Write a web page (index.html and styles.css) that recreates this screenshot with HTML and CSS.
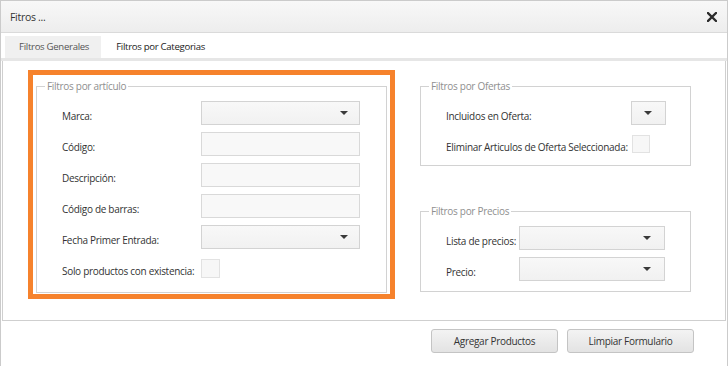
FILE: index.html
```html
<!DOCTYPE html>
<html lang="es">
<head>
<meta charset="utf-8">
<title>Fitros ...</title>
<link rel="stylesheet" href="styles.css">
</head>
<body>
<div class="window">
  <div class="titlebar">
    <span class="title">Fitros ...</span>
    <svg class="close" width="10" height="10" viewBox="0 0 10 10"><path d="M1 1 L9 9 M9 1 L1 9" stroke="#2b2b2b" stroke-width="2.3" stroke-linecap="square"/></svg>
  </div>
  <div class="tabs">
    <div class="tab active">Filtros Generales</div>
    <div class="tab">Filtros por Categorias</div>
  </div>
  <div class="panel">
    <div class="highlight">
      <fieldset class="group group-art">
        <legend>Filtros por artículo</legend>
        <div class="rows">
          <div class="row"><span class="label">Marca:</span><div class="select wide"><span class="arrow"></span></div></div>
          <div class="row"><span class="label">Código:</span><div class="input wide"></div></div>
          <div class="row"><span class="label">Descripción:</span><div class="input wide"></div></div>
          <div class="row"><span class="label">Código de barras:</span><div class="input wide"></div></div>
          <div class="row"><span class="label">Fecha Primer Entrada:</span><div class="select wide"><span class="arrow"></span></div></div>
          <div class="row"><span class="label">Solo productos con existencia:</span><div class="check"></div></div>
        </div>
      </fieldset>
    </div>
    <div class="side">
      <fieldset class="group group-side">
        <legend>Filtros por Ofertas</legend>
        <div class="rows">
          <div class="row"><span class="label lab-of">Incluidos en Oferta:</span><div class="select tiny"><span class="arrow"></span></div></div>
          <div class="row"><span class="label lab-of">Eliminar Articulos de Oferta Seleccionada:</span><div class="check check-of"></div></div>
        </div>
      </fieldset>
      <fieldset class="group group-side group-price">
        <legend>Filtros por Precios</legend>
        <div class="rows">
          <div class="row"><span class="label lab-pr">Lista de precios:</span><div class="select mid"><span class="arrow"></span></div></div>
          <div class="row"><span class="label lab-pr">Precio:</span><div class="select mid"><span class="arrow"></span></div></div>
        </div>
      </fieldset>
    </div>
  </div>
  <div class="footer">
    <button class="btn">Agregar Productos</button>
    <button class="btn">Limpiar Formulario</button>
  </div>
</div>
</body>
</html>
```

FILE: styles.css
```css
* { box-sizing: border-box; }
html, body { margin: 0; padding: 0; background: #fff; }
body { font-family: "Open Sans", "Noto Sans", sans-serif; font-size: 10px; letter-spacing: -0.3px; color: #333; }

.window {
  width: 728px;
  height: 366px;
  border: 1px solid #cbcbcb;
  border-bottom: none;
  background: #fff;
  overflow: hidden;
}

.titlebar {
  height: 32px;
  border-bottom: 1px solid #dadada;
  background: linear-gradient(#f8f8f8, #ededed);
  display: flex;
  align-items: center;
  justify-content: space-between;
  padding: 0 10px 0 9px;
}
.title { font-size: 10.5px; color: #333; }
.close { display: block; }

.tabs {
  height: 28px;
  padding: 3px 0 0 4px;
  border-bottom: 3px solid #e6e6e6;
  display: flex;
}
.tab {
  height: 22px;
  line-height: 22px;
  padding: 0 12px 0 14px;
  font-size: 9.6px;
  color: #222;
}
.tab.active { background: #f0f0f0; color: #555; }
.tab + .tab { padding-left: 15px; }

.panel {
  margin: 0 1px;
  height: 260px;
  border: 1px solid #cfcfcf;
  border-top: none;
  padding: 9px 0 0 25px;
  display: flex;
  align-items: flex-start;
}

.highlight {
  width: 367px;
  height: 229px;
  border: 5px solid #f6822c;
  padding: 5px 3px 0 3px;
}

.group {
  margin: 0;
  padding: 0;
  border: 1px solid #d2d2d2;
  min-width: 0;
}
.group legend {
  margin-left: 8px;
  padding: 0 2px;
  font-size: 10px;
  line-height: 12px;
  color: #8f8f8f;
}
.group-art { height: 213px; }
.rows {
  display: flex;
  flex-direction: column;
  gap: 7px;
  padding: 9px 0 0 25px;
}
.row {
  display: flex;
  height: 24px;
  align-items: center;
}
.label {
  width: 139px;
  flex: none;
  padding-top: 5px;
  color: #333;
  white-space: nowrap;
}

.select, .input {
  height: 24px;
  border: 1px solid #d3d3d3;
  background: #f6f6f6;
  position: relative;
}
.select { background: linear-gradient(#f8f8f8, #f1f1f1); }
.input { background: #f8f8f8; border-color: #d9d9d9; }
.wide { width: 159px; }
.tiny { width: 35px; }
.mid { width: 146px; }
.arrow {
  position: absolute;
  right: 11px;
  top: 9px;
  width: 0;
  height: 0;
  border-left: 4px solid transparent;
  border-right: 4px solid transparent;
  border-top: 4px solid #3a3a3a;
}
.tiny .arrow, .mid .arrow { right: 13px; }

.check {
  width: 19px;
  height: 19px;
  border: 1px solid #e2e2e2;
  background: #f7f7f7;
}
.check-of { width: 18px; height: 18px; margin-left: 1px; }

.side {
  margin-left: 25px;
  margin-top: 10px;
  width: 271px;
  display: flex;
  flex-direction: column;
}
.group-side { height: 86px; }
.group-price { margin-top: 39px; height: 87px; }
.lab-of { width: 185px; }
.lab-pr { width: 73px; }

.footer {
  display: flex;
  justify-content: flex-end;
  gap: 9px;
  padding: 8px 33px 0 0;
}
.btn {
  width: 127px;
  height: 24px;
  border: 1px solid #c4c4c4;
  border-radius: 3px;
  background: linear-gradient(#f3f3f3, #e3e3e3);
  font-family: "Open Sans", "Noto Sans", sans-serif;
  font-size: 10px;
  letter-spacing: -0.3px;
  color: #333;
  padding: 0;
}
```
